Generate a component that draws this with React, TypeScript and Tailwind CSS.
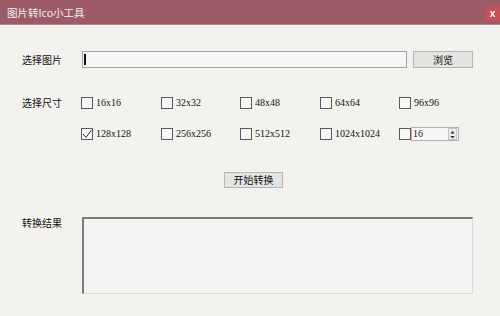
import React from "react";

const cjk = { fontFamily: '"Noto Sans CJK SC", "Noto Sans", sans-serif' } as const;
const serif = { fontFamily: '"Liberation Serif", "Noto Sans CJK SC", serif' } as const;

function Box({ checked = false }: { checked?: boolean }) {
  return (
    <span className="w-[12px] h-[12px] border border-[#5a5a5a] bg-[#f7f7f7] flex items-center justify-center shrink-0">
      {checked && (
        <svg width="10" height="10" viewBox="0 0 10 10">
          <path d="M1 5 L4 8.5 L9.5 1" fill="none" stroke="#333" strokeWidth="1" />
        </svg>
      )}
    </span>
  );
}

function Check({ label, checked = false }: { label: string; checked?: boolean }) {
  return (
    <div className="flex items-center gap-[3px] h-[12px]">
      <Box checked={checked} />
      <span className="text-[10px] leading-none text-[#111]" style={serif}>
        {label}
      </span>
    </div>
  );
}

export default function App() {
  return (
    <div className="w-[500px] h-[316px] bg-[#f3f2ee] flex flex-col overflow-hidden">
      <div className="h-[25px] bg-[#9d5b68] flex items-start justify-between border-b border-[#b98a93]">
        <span className="text-[#f4eef0] text-[10.5px] leading-none pl-[7px] mt-[8px]" style={cjk}>
          图片转Ico小工具
        </span>
        <span className="w-[15px] h-[14px] mt-[7px] bg-[#c7505a] text-white text-[10px] leading-none flex items-center justify-center font-bold" style={{ fontFamily: '"Liberation Sans", sans-serif' }}>
          x
        </span>
      </div>

      <div className="flex flex-col pl-[22px]">
        {/* row 1 */}
        <div className="flex items-center h-[17px] mt-[26px]">
          <span className="w-[60px] text-[10px] leading-none text-[#111]" style={cjk}>
            选择图片
          </span>
          <div className="w-[325px] h-[17px] border border-[#a3a3a3] bg-[#f6f6f6] flex items-center pl-[1px]">
            <span className="w-[2px] h-[11px] bg-[#111]" />
          </div>
          <div className="ml-[6px] w-[60px] h-[17px] border border-[#b5b5b5] bg-[#e4e4e2] flex items-center justify-center text-[10px] leading-none text-[#111]" style={cjk}>
            浏览
          </div>
        </div>

        {/* row 2 */}
        <div className="flex mt-[29px]">
          <span className="w-[59px] text-[10px] leading-[12px] text-[#111]" style={cjk}>
            选择尺寸
          </span>
          <div className="grid grid-cols-[80px_79px_80px_79px_80px] gap-y-[19px]">
            <Check label="16x16" />
            <Check label="32x32" />
            <Check label="48x48" />
            <Check label="64x64" />
            <Check label="96x96" />
            <Check label="128x128" checked />
            <Check label="256x256" />
            <Check label="512x512" />
            <Check label="1024x1024" />
            <div className="flex items-center h-[12px]">
              <Box />
              <div className="w-[48px] h-[14px] border border-[#b0b0b0] bg-[#f8f8f8] flex items-center justify-between">
                <span className="text-[10px] leading-none pl-[1px] text-[#111]" style={serif}>
                  16
                </span>
                <div className="w-[9px] h-[12px] mr-[1px] flex flex-col border border-[#c4c4c4] bg-[#ececec]">
                  <svg width="7" height="5" viewBox="0 0 7 5" className="mx-auto mt-[1px]">
                    <path d="M1 4 L3.5 1 L6 4 Z" fill="#333" />
                  </svg>
                  <svg width="7" height="5" viewBox="0 0 7 5" className="mx-auto">
                    <path d="M1 1 L3.5 4 L6 1 Z" fill="#333" />
                  </svg>
                </div>
              </div>
            </div>
          </div>
        </div>

        {/* row 3 */}
        <div className="mt-[32px] ml-[202px] w-[59px] h-[16px] border border-[#b5b5b5] bg-[#e4e4e2] flex items-center justify-center text-[10px] leading-none text-[#111]" style={cjk}>
          开始转换
        </div>

        {/* row 4 */}
        <div className="flex mt-[29px]">
          <span className="w-[60px] text-[10px] leading-none pt-[1px] text-[#111]" style={cjk}>
            转换结果
          </span>
          <div className="w-[391px] h-[77px] bg-[#f4f4f4] border-t-2 border-l-2 border-r border-b border-t-[#7a7a7a] border-l-[#7a7a7a] border-r-[#dcdcdc] border-b-[#dcdcdc]" />
        </div>
      </div>
    </div>
  );
}
